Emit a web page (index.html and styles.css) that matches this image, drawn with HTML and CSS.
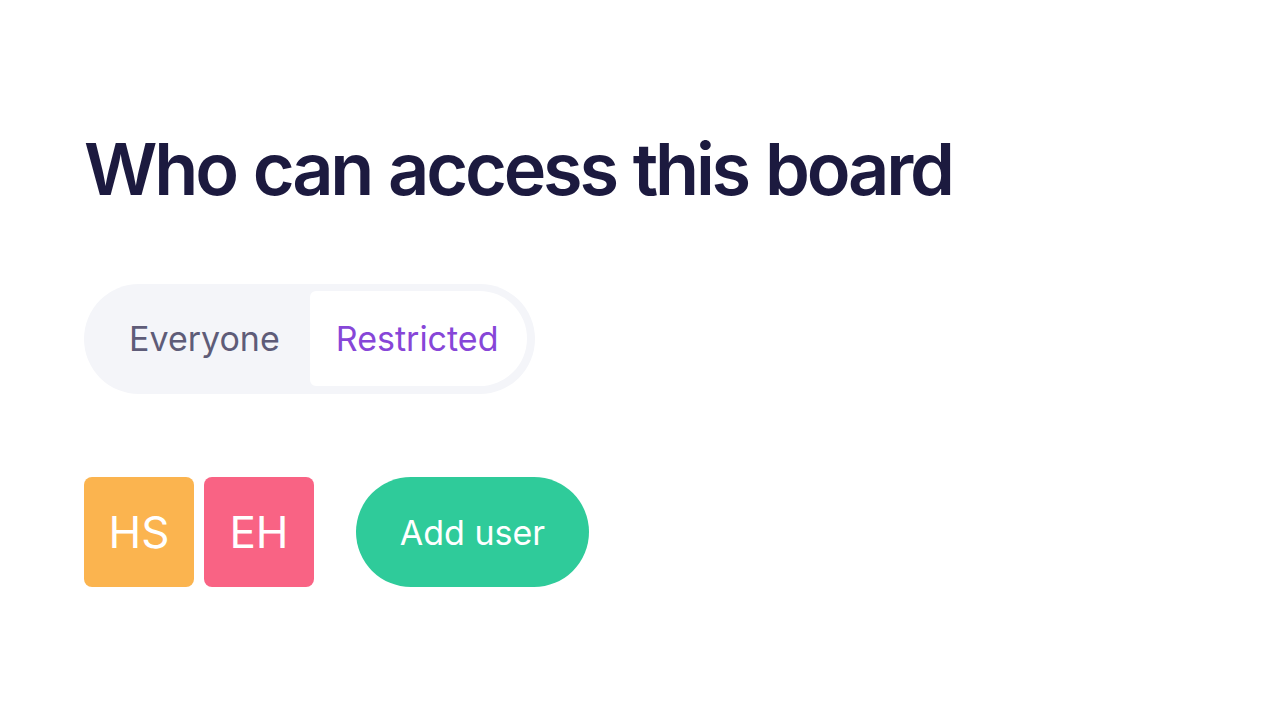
FILE: index.html
```html
<!DOCTYPE html>
<html lang="en">
<head>
<meta charset="utf-8">
<title>Who can access this board</title>
<link rel="stylesheet" href="styles.css">
</head>
<body>
<main class="panel">
  <h1 class="title">Who can access this board</h1>
  <div class="toggle">
    <button class="toggle-option">Everyone</button>
    <button class="toggle-option is-active">Restricted</button>
  </div>
  <div class="users">
    <div class="avatar avatar-orange">HS</div>
    <div class="avatar avatar-pink">EH</div>
    <button class="add-user">Add user</button>
  </div>
</main>
</body>
</html>
```
FILE: styles.css
```css
html, body {
  margin: 0;
  padding: 0;
  background: #ffffff;
}
body {
  font-family: Inter, "Noto Sans", sans-serif;
}
.panel {
  padding: 125px 0 0 84px;
  display: flex;
  flex-direction: column;
  align-items: flex-start;
}
.title {
  margin: 0;
  font-size: 72px;
  line-height: 87px;
  font-weight: 600;
  color: #1c1a3f;
  letter-spacing: -3.2px;
  word-spacing: 2px;
}
.toggle {
  margin-top: 72px;
  display: flex;
  align-items: stretch;
  background: #f4f5f9;
  border-radius: 55px;
  padding: 7px 8px 8px 0;
  height: 95px;
}
.toggle-option {
  border: 0;
  background: transparent;
  font-family: inherit;
  font-size: 34px;
  font-weight: 400;
  color: #5e5c78;
  padding: 0 30px 0 45px;
  cursor: pointer;
}
.toggle-option.is-active {
  background: #ffffff;
  color: #8746d8;
  padding: 0 29px 0 26px;
  border-radius: 6px 48px 48px 6px;
}
.users {
  margin-top: 83px;
  display: flex;
  align-items: center;
  gap: 10px;
}
.avatar {
  width: 110px;
  height: 110px;
  border-radius: 8px;
  display: flex;
  align-items: center;
  justify-content: center;
  color: #ffffff;
  font-size: 44px;
  font-weight: 400;
}
.avatar-orange { background: #fbb44f; }
.avatar-pink { background: #f96384; }
.add-user {
  margin-left: 32px;
  height: 110px;
  width: 233px;
  border: 0;
  border-radius: 55px;
  background: #2fcb9a;
  color: #ffffff;
  font-family: inherit;
  font-size: 34px;
  font-weight: 400;
  cursor: pointer;
}
```
